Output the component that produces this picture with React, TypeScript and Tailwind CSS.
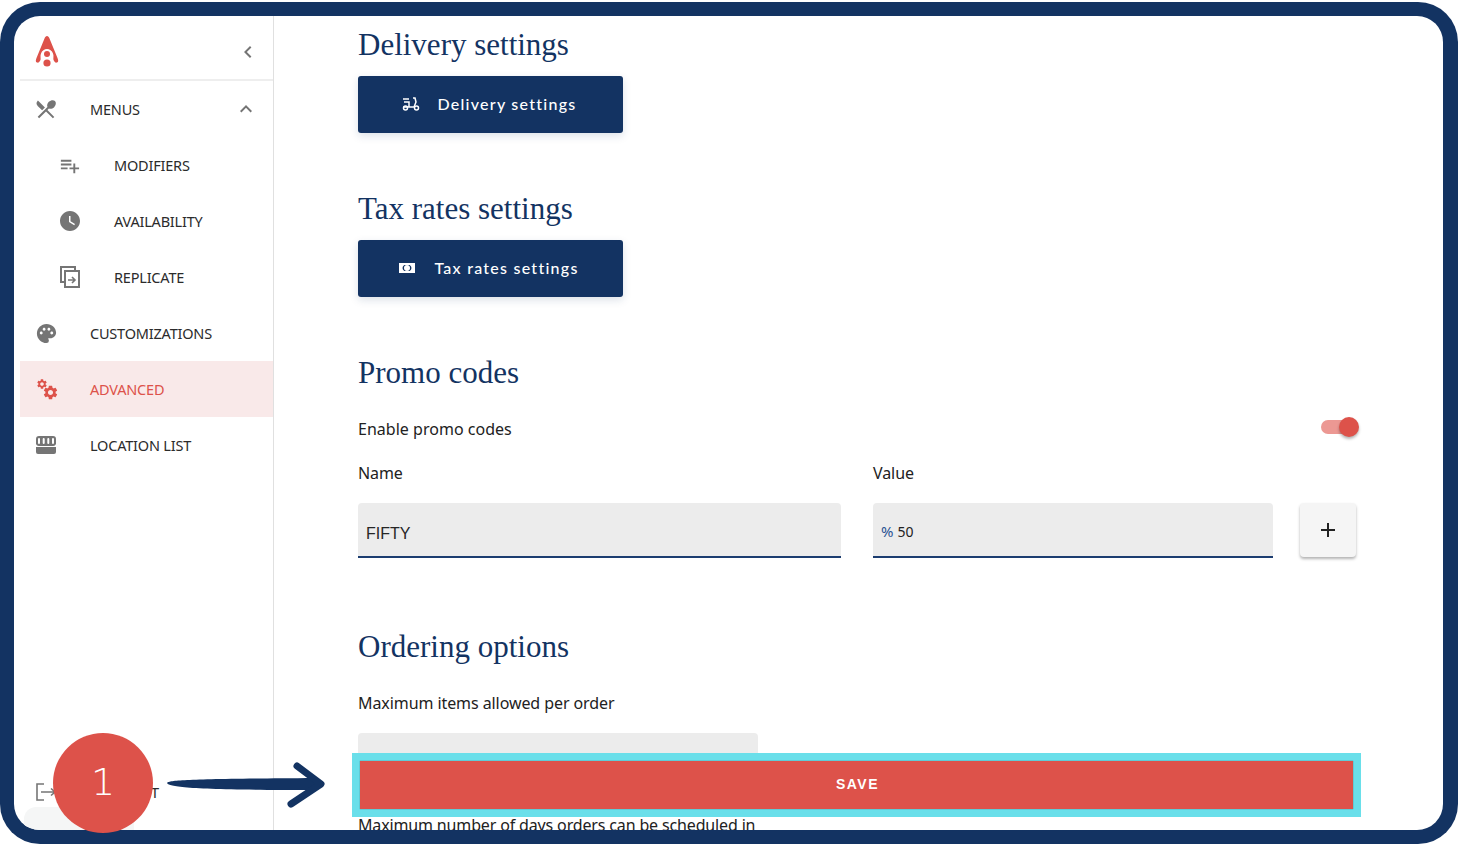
import { ReactNode } from 'react'
import {
  MdChevronLeft,
  MdExpandLess,
  MdPalette,
  MdPlaylistAdd,
  MdRestaurantMenu,
  MdSettings,
  MdWatchLater,
} from 'react-icons/md'

const navy = 'text-[#133362]'

const Logo = () => (
  <svg width="26" height="34" viewBox="0 0 26 34" className="text-[#dd524a]">
    <path
      fill="currentColor"
      d="M13 1 C14 1 15 2 15.5 3.5 L23.5 23 C24.5 25.5 24.5 27 23 27.5 C21.5 28 20.5 27 19.5 25 C19 23.5 20 21 19 18.5 C18 15.5 15.5 14 13 14 C10.5 14 8 15.5 7 18.5 C6 21 7 23.5 6.5 25 C5.5 27 4.5 28 3 27.5 C1.5 27 1.5 25.5 2.5 23 L10.5 3.5 C11 2 12 1 13 1 Z"
    />
    <circle cx="13" cy="19" r="3" fill="currentColor" />
    <circle cx="13" cy="28" r="3.6" fill="currentColor" />
  </svg>
)

const ReplicateIcon = () => (
  <svg width="22" height="24" viewBox="0 0 22 24" fill="none" stroke="#757575" strokeWidth="2" className="-ml-[1px]">
    <path d="M7 17H2V2h14v4" />
    <rect x="6" y="6" width="14" height="16" />
    <path d="M9 15h7M13 12l3 3-3 3" strokeWidth="1.6" />
  </svg>
)

const GearsIcon = () => (
  <span className="relative block w-[22px] h-[22px] text-[#dd524a]">
    <MdSettings size={12} className="absolute left-0 top-0" />
    <MdSettings size={17} className="absolute left-[6px] top-[6px]" />
  </span>
)

const StoreIcon = () => (
  <svg width="20" height="18" viewBox="0 0 20 18">
    <path
      fill="#757575"
      d="M3 0h14a3 3 0 0 1 3 3v5a3 3 0 0 1-3 2H3a3 3 0 0 1-3-2V3a3 3 0 0 1 3-3Z"
    />
    <path
      stroke="#fff"
      strokeWidth="2"
      strokeLinecap="round"
      d="M3 3v4M7.7 3v4M12.3 3v4M17 3v4"
    />
    <path fill="#757575" d="M0 11h20v5a2 2 0 0 1-2 2H2a2 2 0 0 1-2-2Z" />
  </svg>
)

const LogoutIcon = () => (
  <svg width="20" height="18" viewBox="0 0 20 18" fill="none" stroke="#757575" strokeWidth="1.6">
    <path d="M8 1H1v16h7" />
    <path d="M5 9h14M15 5.5 19 9l-4 3.5" />
  </svg>
)

const ScooterIcon = () => (
  <svg width="18" height="14" viewBox="0 0 18 14" fill="none" stroke="#fff" strokeWidth="1.5">
    <path d="M1 2h6M2 5h5v5H1.5M7 10h5l2-5-1-4h-2" />
    <circle cx="3.5" cy="11" r="2" />
    <circle cx="14.5" cy="11" r="2" />
  </svg>
)

const MoneyIcon = () => (
  <svg width="16" height="12" viewBox="0 0 16 12">
    <path fill="#fff" fillRule="evenodd" d="M0 1h16v10H0ZM2 3v6h12V3Z" />
    <path fill="#fff" d="M2 3h3v6H2zM11 3h3v6h-3z" />
    <circle cx="8" cy="6" r="3" fill="#fff" />
    <path fill="#133362" d="M5 3.2a3.4 3.4 0 0 0 0 5.6ZM11 3.2a3.4 3.4 0 0 1 0 5.6Z" />
  </svg>
)

type NavItemProps = {
  icon: ReactNode
  label: string
  nested?: boolean
  active?: boolean
  trailing?: ReactNode
}

const NavItem = ({ icon, label, nested, active, trailing }: NavItemProps) => (
  <div
    className={`flex items-center h-14 shrink-0 text-[14.5px] ${
      nested ? 'pl-10' : 'pl-4'
    } ${active ? 'bg-[#f9e9e9] text-[#dd524a]' : 'text-[#2b2b2b]'}`}
  >
    <span className="w-[54px] flex items-center">{icon}</span>
    <span className="flex-1 pt-[2px] tracking-[-0.2px]">{label}</span>
    {trailing}
  </div>
)

const Sidebar = () => (
  <aside className="w-[260px] shrink-0 pl-[6px] border-r border-[#e0e0e0] flex flex-col font-['Noto_Sans',sans-serif]">
    <div className="h-[65px] shrink-0 flex items-center justify-between pt-[8px] pl-[14px] pr-3 border-b-2 border-[#eeeeee]">
      <Logo />
      <MdChevronLeft size={24} className="text-[#757575] mr-[1px]" />
    </div>
    <NavItem
      icon={<MdRestaurantMenu size={24} className="text-[#757575] -ml-[2px]" />}
      label="MENUS"
      trailing={<MdExpandLess size={24} className="text-[#757575] mr-[15px]" />}
    />
    <NavItem nested icon={<MdPlaylistAdd size={23} className="text-[#757575] -ml-[2px]" />} label="MODIFIERS" />
    <NavItem nested icon={<MdWatchLater size={24} className="text-[#757575] -ml-[2px]" />} label="AVAILABILITY" />
    <NavItem nested icon={<ReplicateIcon />} label="REPLICATE" />
    <NavItem icon={<MdPalette size={23} className="text-[#757575] -ml-[1px]" />} label="CUSTOMIZATIONS" />
    <NavItem active icon={<GearsIcon />} label="ADVANCED" />
    <NavItem icon={<StoreIcon />} label="LOCATION LIST" />
    <div className="mt-auto">
      <div className="flex items-center h-[30px] pl-4 text-[15px] text-[#2b2b2b]">
        <span className="w-[54px] flex items-center">
          <LogoutIcon />
        </span>
        <span className="tracking-[-0.2px]">SIGN OUT</span>
      </div>
      <div className="h-[23px] w-[110px] ml-1 rounded-t-[12px] bg-[#f5f6f6]" />
    </div>
  </aside>
)

const Heading = ({ children }: { children: ReactNode }) => (
  <h2 className={`font-['Liberation_Serif',serif] text-[31px] leading-[40px] ${navy}`}>
    {children}
  </h2>
)

const NavyButton = ({ icon, label, gap }: { icon: ReactNode; label: string; gap: string }) => (
  <button
    className={`w-[265px] h-[57px] mt-[11px] pb-[1px] pr-[3px] rounded-[3px] bg-[#133362] text-white flex items-center justify-center ${gap} font-['Lato',sans-serif] font-medium text-[16px] tracking-[1.25px] shadow-[0_3px_8px_rgba(19,51,98,0.15)]`}
  >
    {icon}
    {label}
  </button>
)

const Field = ({ children, className }: { children: ReactNode; className: string }) => (
  <div className={`h-[55px] rounded-t-[4px] bg-[#ececec] border-b-2 border-[#1c3d70] flex items-center px-2 ${className}`}>
    {children}
  </div>
)

const Main = () => (
  <main className="flex-1 min-w-0 pl-[84px] pr-[86px] pt-[9px] font-['Noto_Sans',sans-serif] text-[16px] text-[#222222]">
    <Heading>Delivery settings</Heading>
    <NavyButton icon={<ScooterIcon />} label="Delivery settings" gap="gap-[18px]" />
    <div className="mt-[56px]">
      <Heading>Tax rates settings</Heading>
      <NavyButton icon={<MoneyIcon />} label="Tax rates settings" gap="gap-[19px]" />
    </div>
    <div className="mt-[56px]">
      <Heading>Promo codes</Heading>
      <div className="flex items-center justify-between mt-[24px] h-[24px]">
        <span className="tracking-[0.02px]">Enable promo codes</span>
        <span className="relative block w-[38px] h-[20px] -mt-[4px] mr-[-2px]">
          <span className="absolute left-0 top-[3px] w-[34px] h-[14px] rounded-full bg-[#ec9893]" />
          <span className="absolute right-0 top-0 w-[20px] h-[20px] rounded-full bg-[#dd524a] shadow-[0_2px_3px_rgba(0,0,0,0.3)]" />
        </span>
      </div>
      <div className="flex mt-[20px] gap-[32px] tracking-[-0.08px]">
        <span className="w-[483px]">Name</span>
        <span>Value</span>
      </div>
      <div className="flex items-start mt-[18px]">
        <Field className="w-[483px] pt-[9px] font-['Liberation_Sans',sans-serif] text-[16px] text-[#262626]">FIFTY</Field>
        <Field className="w-[400px] ml-[32px] text-[14px] pt-[4px]">
          <span className="text-[15px] text-[#2a5293] mr-1">%</span>50
        </Field>
        <button className="w-[56px] h-[54px] ml-[27px] rounded-[4px] bg-[#f5f5f5] flex items-center justify-center shadow-[0_2px_3px_rgba(0,0,0,0.3)]">
          <svg width="16" height="16" viewBox="0 0 16 16" stroke="#222" strokeWidth="2">
            <path d="M8 1v14M1 8h14" />
          </svg>
        </button>
      </div>
    </div>
    <div className="mt-[69px]">
      <Heading>Ordering options</Heading>
      <p className="mt-[24px] leading-[24px] tracking-[-0.08px]">Maximum items allowed per order</p>
      <div className="w-[400px] h-[54px] mt-[18px] rounded-t-[4px] bg-[#ececec]" />
      <p className="mt-[26px] leading-[24px] tracking-[-0.15px] whitespace-nowrap">
        Maximum number of days orders can be scheduled in
      </p>
    </div>
  </main>
)

const Annotations = () => (
  <>
    <div className="absolute left-[352px] top-[753px] w-[1009px] h-[64px] bg-[#6adfea] p-2">
      <div className="h-full pl-[2px] pb-[1px] bg-[#dd524a] flex items-center justify-center text-white font-['Liberation_Sans',sans-serif] font-bold text-[14px] tracking-[1.5px] shadow-[0_0_1px_rgba(0,0,0,0.5)]">
        SAVE
      </div>
    </div>
    <div className="absolute left-[53px] top-[733px] w-[100px] h-[100px] pb-[2px] rounded-full bg-[#dd524a] flex items-center justify-center text-white text-[38px] font-extralight font-['DejaVu_Sans',sans-serif]">
      1
    </div>
    <svg className="absolute left-[160px] top-[755px]" width="175" height="60" viewBox="0 0 175 60">
      <path fill="#133362" d="M7 28 C9 25 30 24 155 23 L155 35 C30 35 9 32 7 28 Z" />
      <path
        d="M137 11 L161 29 L131 49"
        fill="none"
        stroke="#133362"
        strokeWidth="7"
        strokeLinecap="round"
        strokeLinejoin="round"
      />
    </svg>
  </>
)

export default function App() {
  return (
    <div className="relative w-[1458px] h-[844px] overflow-hidden bg-white">
      <div className="absolute inset-x-0 top-[2px] bottom-0 rounded-[40px] bg-[#133362]" />
      <div className="absolute left-[14px] right-[15px] top-4 bottom-[14px] rounded-[26px] bg-white overflow-hidden flex">
        <Sidebar />
        <Main />
      </div>
      <Annotations />
    </div>
  )
}
